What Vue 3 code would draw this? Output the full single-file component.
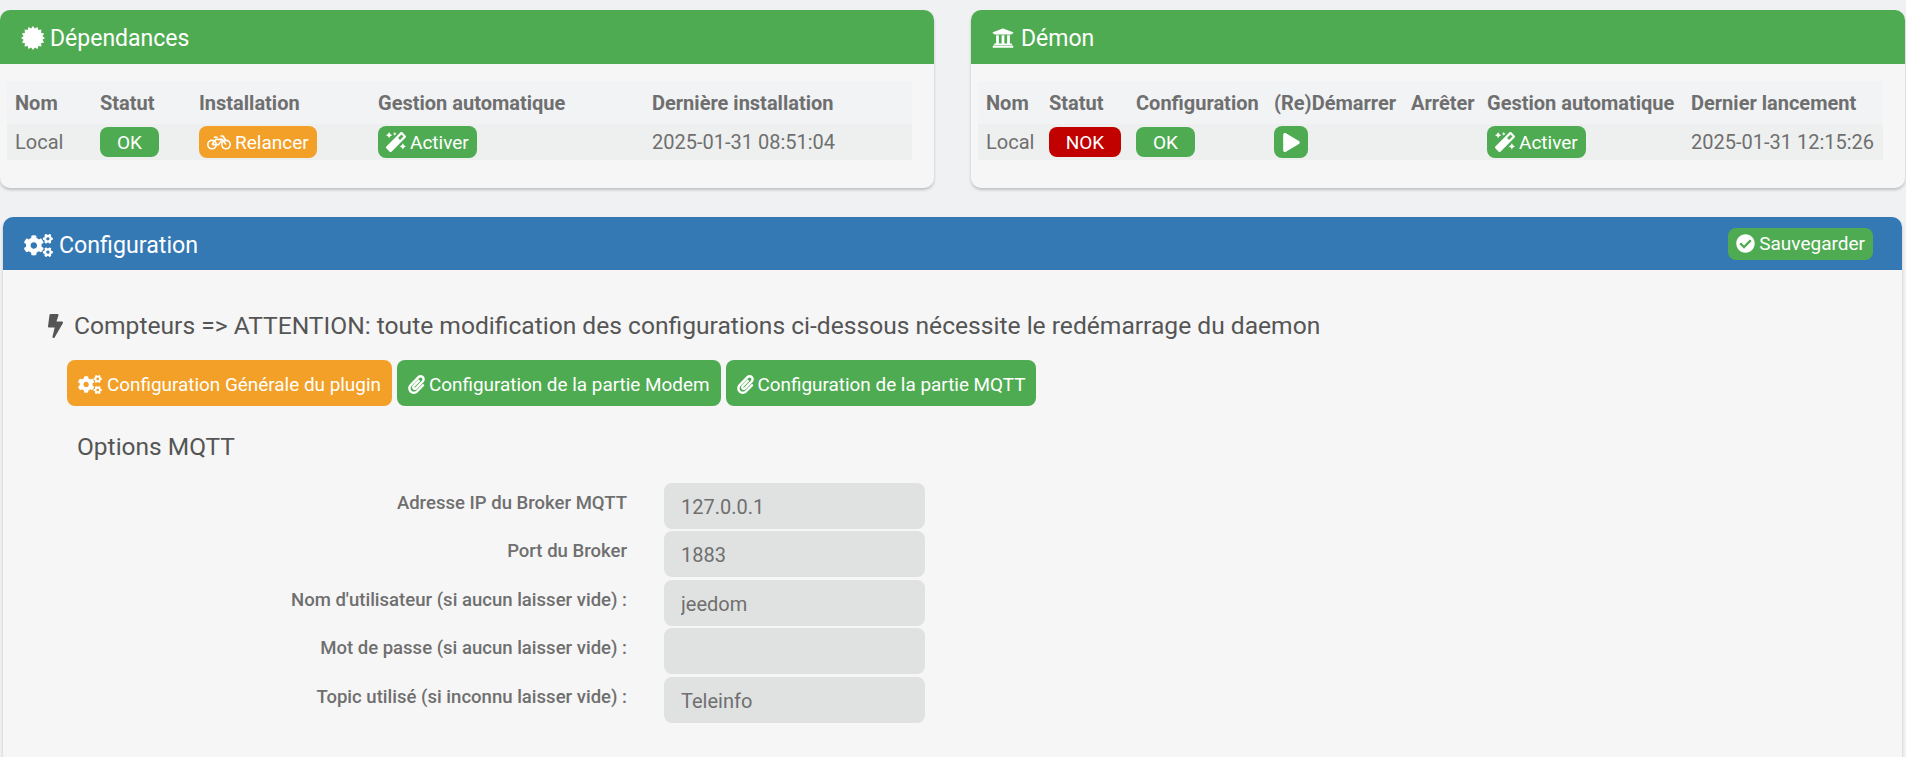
<script setup>
import { computed } from 'vue'

const burst = computed(() => {
  const pts = []
  const n = 16
  for (let i = 0; i < n * 2; i++) {
    const r = i % 2 ? 9.6 : 12
    const a = (Math.PI * i) / n
    pts.push(`${(12 + r * Math.sin(a)).toFixed(2)},${(12 - r * Math.cos(a)).toFixed(2)}`)
  }
  return pts.join(' ')
})

const cogs = 'M512.1 191l-8.2 14.3c-3 5.3-9.4 7.5-15.1 5.4-11.8-4.4-22.6-10.7-32.1-18.6-4.6-3.8-5.8-10.5-2.8-15.7l8.2-14.3c-6.9-8-12.3-17.3-15.9-27.4h-16.5c-6 0-11.2-4.3-12.2-10.3-2-12-2.1-24.6 0-37.1 1-6 6.2-10.4 12.2-10.4h16.5c3.6-10.1 9-19.4 15.9-27.4l-8.2-14.3c-3-5.2-1.9-11.9 2.8-15.7 9.5-7.9 20.4-14.2 32.1-18.6 5.7-2.1 12.1.1 15.1 5.4l8.2 14.3c10.5-1.9 21.2-1.9 31.7 0L552 6.3c3-5.3 9.4-7.5 15.1-5.4 11.8 4.4 22.6 10.7 32.1 18.6 4.6 3.8 5.8 10.5 2.8 15.7l-8.2 14.3c6.9 8 12.3 17.3 15.9 27.4h16.5c6 0 11.2 4.3 12.2 10.3 2 12 2.1 24.6 0 37.1-1 6-6.2 10.4-12.2 10.4h-16.5c-3.6 10.1-9 19.4-15.9 27.4l8.2 14.3c3 5.2 1.9 11.9-2.8 15.7-9.5 7.9-20.4 14.2-32.1 18.6-5.7 2.1-12.1-.1-15.1-5.4l-8.2-14.3c-10.4 1.9-21.2 1.9-31.7 0zm-10.5-58.8c38.5 29.6 82.4-14.3 52.8-52.8-38.5-29.7-82.4 14.3-52.8 52.8zM386.3 286.1l33.7 16.8c10.1 5.8 14.5 18.1 10.5 29.1-8.9 24.2-26.4 46.4-42.6 65.8-7.4 8.9-20.2 11.1-30.3 5.3l-29.1-16.8c-16 13.7-34.6 24.6-54.9 31.7v33.6c0 11.6-8.3 21.6-19.7 23.6-24.6 4.2-50.4 4.4-75.9 0-11.5-2-20-11.9-20-23.6V418c-20.3-7.2-38.9-18-54.9-31.7L74 403c-10 5.8-22.9 3.6-30.3-5.3-16.2-19.4-33.3-41.6-42.2-65.7-4-10.9.4-23.2 10.5-29.1l33.3-16.8c-3.9-20.9-3.9-42.4 0-63.4L12 205.8c-10.1-5.8-14.6-18.1-10.5-29 8.9-24.2 26-46.4 42.2-65.8 7.4-8.9 20.2-11.1 30.3-5.3l29.1 16.8c16-13.7 34.6-24.6 54.9-31.7V57.1c0-11.5 8.2-21.5 19.6-23.5 24.6-4.2 50.5-4.4 76-.1 11.5 2 20 11.9 20 23.6v33.6c20.3 7.2 38.9 18 54.9 31.7l29.1-16.8c10-5.8 22.9-3.6 30.3 5.3 16.2 19.4 33.2 41.6 42.1 65.8 4 10.9.1 23.2-10 29.1l-33.7 16.8c3.9 21 3.9 42.5 0 63.5zm-117.6 21.1c59.2-77-28.7-164.9-105.7-105.7-59.2 77 28.7 164.9 105.7 105.7zm243.4 182.7l-8.2 14.3c-3 5.3-9.4 7.5-15.1 5.4-11.8-4.4-22.6-10.7-32.1-18.6-4.6-3.8-5.8-10.5-2.8-15.7l8.2-14.3c-6.9-8-12.3-17.3-15.9-27.4h-16.5c-6 0-11.2-4.3-12.2-10.3-2-12-2.1-24.6 0-37.1 1-6 6.2-10.4 12.2-10.4h16.5c3.6-10.1 9-19.4 15.9-27.4l-8.2-14.3c-3-5.2-1.9-11.9 2.8-15.7 9.5-7.9 20.4-14.2 32.1-18.6 5.7-2.1 12.1.1 15.1 5.4l8.2 14.3c10.5-1.9 21.2-1.9 31.7 0l8.2-14.3c3-5.3 9.4-7.5 15.1-5.4 11.8 4.4 22.6 10.7 32.1 18.6 4.6 3.8 5.8 10.5 2.8 15.7l-8.2 14.3c6.9 8 12.3 17.3 15.9 27.4h16.5c6 0 11.2 4.3 12.2 10.3 2 12 2.1 24.6 0 37.1-1 6-6.2 10.4-12.2 10.4h-16.5c-3.6 10.1-9 19.4-15.9 27.4l8.2 14.3c3 5.2 1.9 11.9-2.8 15.7-9.5 7.9-20.4 14.2-32.1 18.6-5.7 2.1-12.1-.1-15.1-5.4l-8.2-14.3c-10.4 1.9-21.2 1.9-31.7 0zM501.6 431c38.5 29.6 82.4-14.3 52.8-52.8-38.5-29.6-82.4 14.3-52.8 52.8z'
const magic = 'M224 96l16-32 32-16-32-16-16-32-16 32-32 16 32 16 16 32zM80 160l26.66-53.33L160 80l-53.34-26.67L80 0 53.34 53.33 0 80l53.34 26.67L80 160zm352 128l-26.66 53.33L352 368l53.34 26.67L432 448l26.66-53.33L512 368l-53.34-26.67L432 288zm70.62-193.77L417.77 9.38C411.53 3.12 403.34 0 395.15 0c-8.19 0-16.38 3.12-22.63 9.38L9.38 372.52c-12.5 12.5-12.5 32.76 0 45.25l84.85 84.85c6.25 6.25 14.44 9.37 22.62 9.37 8.19 0 16.38-3.12 22.63-9.37l363.14-363.15c12.5-12.48 12.5-32.75 0-45.24zM359.45 203.46l-50.91-50.91 86.6-86.6 50.91 50.91-86.6 86.6z'
const clip = 'M43.246 466.142c-58.43-60.289-57.341-157.511 1.386-217.581L254.392 34c44.316-45.332 116.351-45.336 160.671 0 43.89 44.894 43.943 117.329 0 162.276L232.214 383.128c-29.855 30.537-78.633 30.111-107.982-.998-28.275-29.97-27.368-77.473 1.452-106.953l143.743-146.835c6.182-6.314 16.312-6.422 22.626-.241l22.861 22.379c6.315 6.182 6.422 16.312.241 22.626L171.427 319.927c-4.932 5.045-5.236 13.428-.648 18.292 4.372 4.634 11.245 4.711 15.688.165l182.849-186.851c19.613-20.062 19.613-52.725-.011-72.798-19.189-19.627-49.957-19.637-69.154 0L90.39 293.295c-34.763 35.56-35.299 93.12-1.191 128.313 34.01 35.093 88.985 35.137 123.058.286l172.06-175.999c6.177-6.319 16.307-6.433 22.626-.256l22.877 22.364c6.319 6.177 6.434 16.307.256 22.626l-172.06 175.998c-59.576 60.938-155.943 60.216-214.77-.485z'

const fields = [
  { label: 'Adresse IP du Broker MQTT', value: '127.0.0.1' },
  { label: 'Port du Broker', value: '1883' },
  { label: "Nom d'utilisateur (si aucun laisser vide) :", value: 'jeedom' },
  { label: 'Mot de passe (si aucun laisser vide) :', value: '' },
  { label: 'Topic utilisé (si inconnu laisser vide) :', value: 'Teleinfo' },
]
</script>

<template>
  <div class="page">
    <div class="top">
      <section class="panel">
        <header class="head green">
          <svg class="ic-cert" viewBox="0 0 24 24"><polygon :points="burst" fill="#fff" /></svg>
          <span>Dépendances</span>
        </header>
        <div class="panel-body">
          <div class="tbl tbl-dep">
            <div class="th">Nom</div><div class="th">Statut</div><div class="th">Installation</div><div class="th">Gestion automatique</div><div class="th">Dernière installation</div>
            <div class="td">Local</div>
            <div class="td"><span class="label ok">OK</span></div>
            <div class="td"><a class="btn orange">
              <svg class="ic-bike" viewBox="0 0 24 15" fill="none" stroke="#fff" stroke-width="1.6"><circle cx="5" cy="9.6" r="4.2" /><circle cx="19" cy="9.6" r="4.2" /><path d="M5 9.6 8.8 4.4H15.4L19 9.6M15.4 4.4 11.6 9.6H5M6.8 2.2H10.6M13.4 1H16L19 6" stroke-linejoin="round" /></svg>
              Relancer</a></div>
            <div class="td"><a class="btn green">
              <svg class="ic-magic" viewBox="0 0 512 512"><path :d="magic" fill="#fff" /></svg>
              Activer</a></div>
            <div class="td">2025-01-31 08:51:04</div>
          </div>
        </div>
      </section>

      <section class="panel">
        <header class="head green">
          <svg class="ic-bank" viewBox="0 0 512 512"><path fill="#fff" d="M496 128v16a8 8 0 0 1-8 8h-24v12c0 6.627-5.373 12-12 12H60c-6.627 0-12-5.373-12-12v-12H24a8 8 0 0 1-8-8v-16a8 8 0 0 1 4.941-7.392l232-88a7.996 7.996 0 0 1 6.118 0l232 88A8 8 0 0 1 496 128zm-24 304H40c-13.255 0-24 10.745-24 24v16a8 8 0 0 0 8 8h464a8 8 0 0 0 8-8v-16c0-13.255-10.745-24-24-24zM96 192v192H60c-6.627 0-12 5.373-12 12v20h416v-20c0-6.627-5.373-12-12-12h-36V192h-64v192h-64V192h-64v192h-64V192H96z" /></svg>
          <span>Démon</span>
        </header>
        <div class="panel-body">
          <div class="tbl tbl-dem">
            <div class="th">Nom</div><div class="th">Statut</div><div class="th">Configuration</div><div class="th">(Re)Démarrer</div><div class="th">Arrêter</div><div class="th">Gestion automatique</div><div class="th">Dernier lancement</div>
            <div class="td">Local</div>
            <div class="td"><span class="label nok">NOK</span></div>
            <div class="td"><span class="label ok">OK</span></div>
            <div class="td"><a class="btn green play">
              <svg class="ic-play" viewBox="0 0 448 512"><path fill="#fff" d="M424.4 214.7L72.4 6.6C43.8-10.3 0 6.1 0 47.9V464c0 37.5 40.7 60.1 72.4 41.3l352-208c31.4-18.5 31.5-64.1 0-82.6z" /></svg>
            </a></div>
            <div class="td"></div>
            <div class="td"><a class="btn green">
              <svg class="ic-magic" viewBox="0 0 512 512"><path :d="magic" fill="#fff" /></svg>
              Activer</a></div>
            <div class="td">2025-01-31 12:15:26</div>
          </div>
        </div>
      </section>
    </div>

    <section class="panel config">
      <header class="head blue">
        <svg class="ic-cogs" viewBox="0 0 640 512"><path :d="cogs" fill="#fff" /></svg>
        <span class="grow">Configuration</span>
        <a class="btn green save">
          <svg class="ic-check" viewBox="0 0 512 512"><path fill="#fff" d="M504 256c0 136.967-111.033 248-248 248S8 392.967 8 256 119.033 8 256 8s248 111.033 248 248zM227.314 387.314l184-184c6.248-6.248 6.248-16.379 0-22.627l-22.627-22.627c-6.248-6.249-16.379-6.249-22.628 0L216 308.118l-70.059-70.059c-6.248-6.248-16.379-6.248-22.628 0l-22.627 22.627c-6.248 6.248-6.248 16.379 0 22.627l104 104c6.249 6.249 16.379 6.249 22.628.001z" /></svg>
          Sauvegarder</a>
      </header>
      <div class="config-body">
        <h3 class="warn">
          <svg class="ic-bolt" viewBox="0 0 320 512"><path fill="#555" d="M296 160H180.6l42.6-129.8C227.2 15 215.7 0 200 0H56C44 0 33.8 8.9 32.2 20.8l-32 240C-1.7 275.2 9.5 288 24 288h118.7L96.6 482.5c-3.6 15.2 8 29.5 23.3 29.5 8.4 0 16.4-4.4 20.8-12l176-304c9.3-15.9-2.2-36-20.7-36z" /></svg>
          <span>Compteurs =&gt; ATTENTION: toute modification des configurations ci-dessous nécessite le redémarrage du daemon</span>
        </h3>
        <div class="tabs">
          <a class="tab orange"><svg class="ic-cogs-s" viewBox="0 0 640 512"><path :d="cogs" fill="#fff" /></svg>Configuration Générale du plugin</a>
          <a class="tab green"><svg class="ic-clip" viewBox="0 0 448 512"><path :d="clip" fill="#fff" /></svg>Configuration de la partie Modem</a>
          <a class="tab green"><svg class="ic-clip" viewBox="0 0 448 512"><path :d="clip" fill="#fff" /></svg>Configuration de la partie MQTT</a>
        </div>
        <h4 class="sub">Options MQTT</h4>
        <div class="form">
          <div v-for="f in fields" :key="f.label" class="row">
            <label class="lab">{{ f.label }}</label>
            <input class="inp" type="text" :value="f.value" readonly />
          </div>
        </div>
      </div>
    </section>
  </div>
</template>

<style>
html, body { margin: 0; height: 100%; overflow: hidden; background: #eff1f3; }
</style>

<style scoped>
.page {
  height: 757px;
  overflow: hidden;
  font-family: Roboto, sans-serif;
  font-size: 19px;
  color: #6f6f6f;
  box-sizing: border-box;
  padding-top: 10px;
}
.top { display: flex; gap: 37px; }
.panel {
  width: 934px;
  background: #f6f6f6;
  border-radius: 10px;
  box-shadow: 0 2px 3px rgba(0, 0, 0, 0.2);
}
.head {
  height: 54px;
  display: flex;
  align-items: center;
  padding: 2px 0 0 21px;
  border-radius: 10px 10px 0 0;
  color: #fff;
  font-size: 23px;
  gap: 5px;
  box-sizing: border-box;
}
.head.green { background: #4fab52; }
.head.blue { background: #3478b4; height: 53px; padding-top: 3px; padding-left: 18px; font-size: 23.2px; }
.panel-body { padding: 17px 22px 28px 7px; }
.tbl { display: grid; grid-template-rows: 43px 36px; background: #f1f3f5; font-size: 20px; }
.tbl-dep { grid-template-columns: 85px 99px 179px 274px 268px; }
.tbl-dem { grid-template-columns: 63px 87px 138px 137px 76px 204px 200px; }
.th {
  font-weight: 700;
  padding-left: 8px;
  display: flex;
  align-items: center;
  white-space: nowrap;
}
.td {
  background: #eef0ef;
  padding-left: 8px;
  display: flex;
  align-items: center;
  white-space: nowrap;
}
.label {
  display: inline-flex;
  align-items: center;
  justify-content: center;
  height: 30px;
  border-radius: 8px;
  color: #fff;
  font-size: 19px;
}
.label.ok { width: 59px; background: #4fab52; }
.label.nok { width: 72px; background: #c10000; }
.btn {
  display: inline-flex;
  align-items: center;
  height: 32px;
  padding: 0 8px;
  gap: 4px;
  border-radius: 8px;
  color: #fff;
  white-space: nowrap;
  font-size: 19px;
}
.btn.green, .tab.green { background: #4fab52; }
.btn.orange, .tab.orange { background: #f2a027; }
.btn.play { width: 34px; padding: 0; justify-content: center; box-sizing: border-box; }
.ic-cert { width: 24px; height: 24px; }
.ic-bank { width: 22px; height: 22px; margin-right: 2px; }
.ic-bike { width: 24px; height: 15px; }
.ic-magic { width: 20px; height: 20px; }
.ic-play { width: 17px; height: 19px; }
.ic-cogs { width: 29px; height: 23px; margin-left: 3px; margin-right: 1px; }
.ic-check { width: 19px; height: 19px; }
.ic-bolt { width: 15px; height: 24px; flex: none; }
.ic-cogs-s { width: 24px; height: 19px; margin-right: 5px; flex: none; }
.ic-clip { width: 17px; height: 19px; margin-right: 4px; flex: none; }
.grow { flex: 1; }
.config {
  width: 1899px;
  margin: 29px 0 0 3px;
  height: 600px;
}
.save { height: 32px; margin: -3px 29px 0 0; padding: 0 8px; font-size: 19px; background: #4fab52; }
.config-body { padding: 0 0 0 45px; }
.warn {
  margin: 0;
  padding-top: 41px;
  display: flex;
  align-items: center;
  gap: 11px;
  font-size: 24.6px;
  font-weight: 400;
  line-height: 30px;
  color: #555;
}
.tabs { display: flex; gap: 5px; margin: 19px 0 0 19px; }
.tab {
  display: inline-flex;
  align-items: center;
  height: 46px;
  padding: 2px 11px 0;
  box-sizing: border-box;
  border-radius: 8px;
  color: #fff;
  white-space: nowrap;
  font-size: 18.9px;
}
.sub {
  margin: 26px 0 0 33px;
  font-size: 24.5px;
  font-weight: 400;
  line-height: 30px;
  color: #555;
  position: relative;
  left: -4px;
}
.form { margin-top: 21px; display: flex; flex-direction: column; gap: 2.4px; }
.row { display: flex; align-items: flex-start; height: 46px; }
.lab {
  width: 579px;
  text-align: right;
  font-weight: 500;
  font-size: 18.55px;
  line-height: 40px;
  white-space: nowrap;
}
.inp {
  margin-left: 37px;
  width: 261px;
  height: 46px;
  box-sizing: border-box;
  border: 0;
  outline: 0;
  border-radius: 8px;
  background: #e0e2e1;
  padding: 2px 17px 0;
  font: inherit;
  font-size: 20px;
  color: #6f6f6f;
}
</style>
